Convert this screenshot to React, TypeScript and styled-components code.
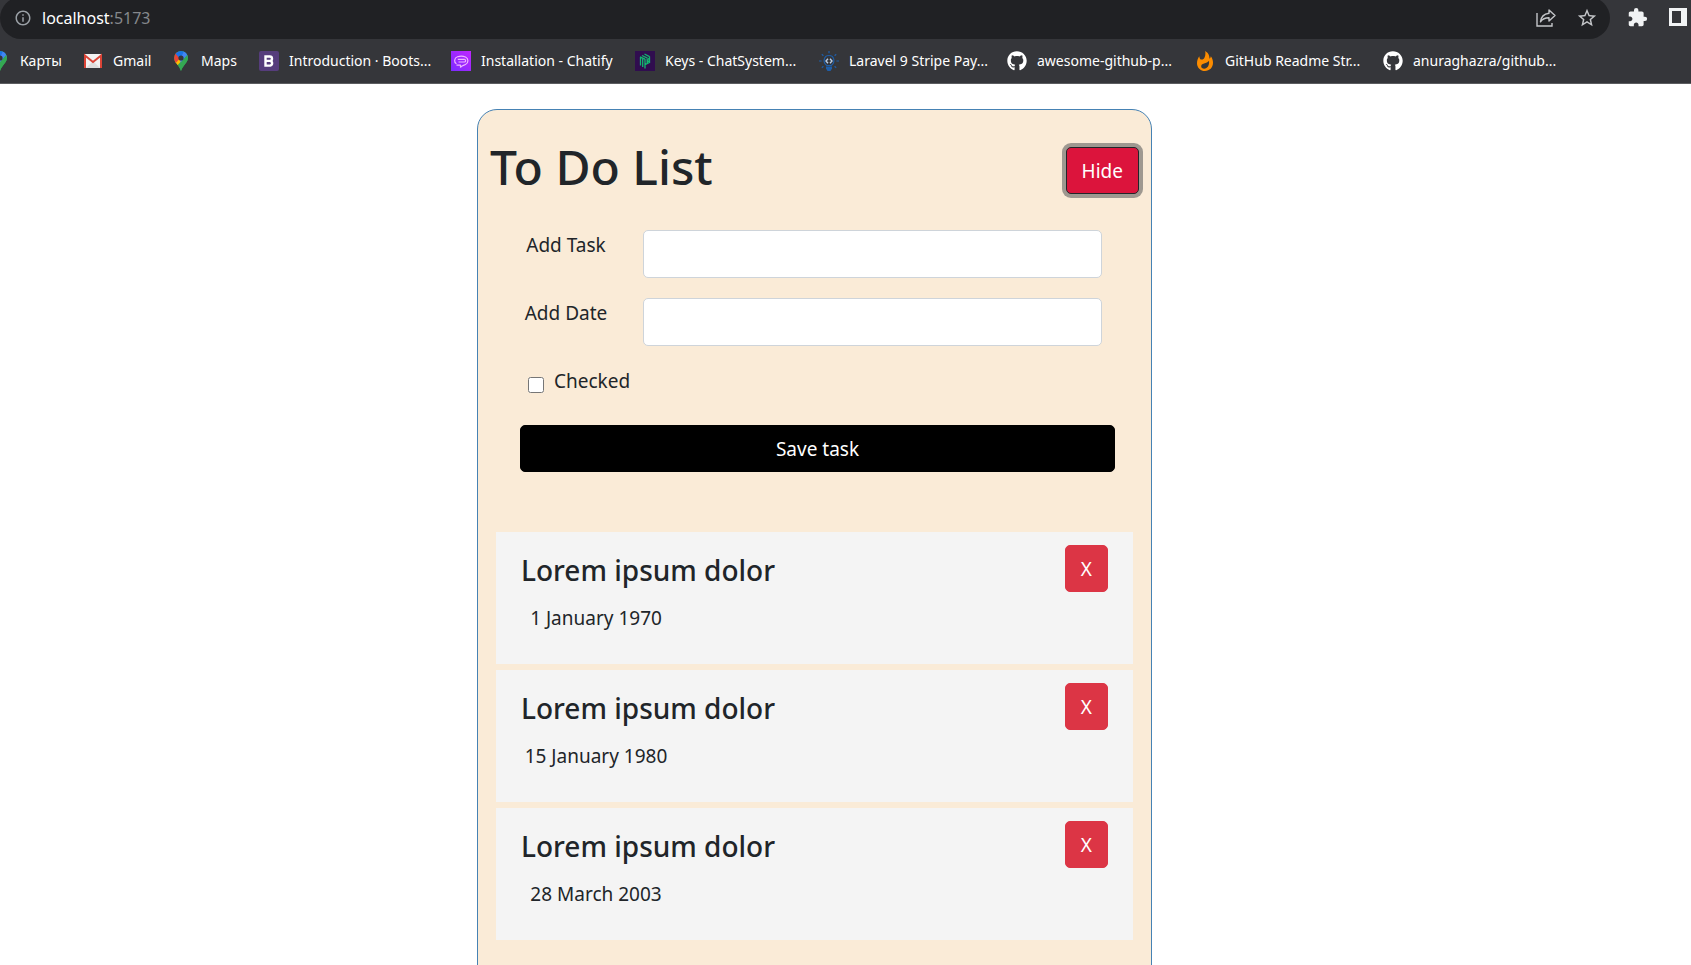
import React from 'react';
import styled, { createGlobalStyle } from 'styled-components';
import { FaGithub } from 'react-icons/fa';
import { MdExtension, MdStarBorder, MdInfoOutline } from 'react-icons/md';

const Global = createGlobalStyle`
  *, *::before, *::after { box-sizing: border-box; }
  body {
    margin: 0;
    background: #fff;
    color: #212529;
    font-family: "Noto Sans", "Open Sans", sans-serif;
    font-size: 19px;
    line-height: 30px;
  }
  button, input { font: inherit; }
  h1, h2, p { margin: 0; }
`;

const Page = styled.div`
  height: 100vh;
  overflow: hidden;
`;

const Chrome = styled.header`
  background: #35363a;
  border-bottom: 1px solid #5c5d60;
  overflow: hidden;
`;

const Toolbar = styled.div`
  display: flex;
  height: 39px;
`;

const AddressBar = styled.div`
  display: flex;
  flex: 1;
  align-items: center;
  gap: 20px;
  height: 42px;
  margin-top: -3px;
  padding: 0 12px 0 14px;
  border-radius: 21px;
  background: #202124;
  color: #9aa0a6;
`;

const SiteInfo = styled.button`
  display: flex;
  padding: 0;
  border: 0;
  background: none;
  color: #9aa0a6;
`;

const Address = styled.div`
  flex: 1;
  margin-left: -10px;
  font-size: 16px;
  color: #85888c;
`;

const Host = styled.span`
  color: #fff;
`;

const IconButton = styled.button<{ $color?: string }>`
  display: flex;
  padding: 0;
  border: 0;
  background: none;
  color: ${(p) => p.$color || '#c4c6c9'};
`;

const ToolbarActions = styled.div`
  display: flex;
  align-items: center;
  gap: 21px;
  height: 34px;
  padding: 0 4px 0 17px;
`;

const Bookmarks = styled.nav`
  display: flex;
  align-items: center;
  gap: 20px;
  height: 44px;
  margin-left: -10px;
`;

const Bookmark = styled.a<{ $width: number }>`
  display: flex;
  flex: none;
  align-items: center;
  gap: 10px;
  width: ${(p) => p.$width}px;
  color: #fff;
  font-size: 14px;
  line-height: 20px;
  white-space: nowrap;
  text-decoration: none;
  svg { flex: none; }
`;

const Main = styled.main`
  display: grid;
  grid-template-columns: 477fr 675fr 539fr;
  padding-top: 25px;
`;

const Card = styled.section`
  grid-column: 2;
  padding: 24px 12px 60px;
  border: 1px solid steelblue;
  border-radius: 20px;
  background: antiquewhite;
`;

const CardHeader = styled.div`
  display: flex;
  justify-content: space-between;
  align-items: flex-start;
  padding-top: 13px;
`;

const Title = styled.h1`
  margin-top: -10px;
  font-size: 48px;
  font-weight: 500;
  line-height: 60px;
`;

const Button = styled.button<{ $tone: string; $focused?: boolean }>`
  height: 47px;
  padding: 0 15px;
  border: 1px solid ${(p) => (p.$focused ? '#212529' : p.$tone)};
  border-radius: 5px;
  background: ${(p) => p.$tone};
  color: #fff;
  box-shadow: ${(p) => (p.$focused ? '0 0 0 4px rgba(66, 70, 73, 0.5)' : 'none')};
`;

const Form = styled.form`
  display: grid;
  gap: 20px;
  margin: 33px 24px 0 30px;
`;

const Field = styled.div`
  display: grid;
  grid-template-columns: 92px 1fr;
  gap: 31px;
  padding-right: 13px;
`;

const FieldLabel = styled.label`
  text-align: center;
`;

const TextInput = styled.input`
  width: 100%;
  height: 48px;
  padding: 0 15px;
  border: 1px solid #ced4da;
  border-radius: 5px;
  background: #fff;
`;

const CheckField = styled.div`
  display: flex;
  gap: 10px;
  height: 39px;
  padding-left: 8px;
`;

const Checkbox = styled.input`
  width: 16px;
  height: 16px;
  margin: 11px 0 0;
`;

const List = styled.ul`
  display: grid;
  gap: 6px;
  margin: 60px 6px 0;
  padding: 0;
  list-style: none;
`;

const Item = styled.li`
  display: flex;
  justify-content: space-between;
  align-items: flex-start;
  height: 132px;
  padding: 13px 25px;
  background: #f4f4f4;
`;

const ItemTitle = styled.h2`
  padding-top: 6px;
  font-size: 28px;
  font-weight: 500;
  line-height: 38px;
`;

const ItemDate = styled.p`
  width: 150px;
  padding-top: 14px;
  text-align: center;
`;

const MapsIcon = () => (
  <svg width="20" height="20" viewBox="0 0 20 20" aria-hidden="true">
    <clipPath id="pin"><path d="M10 0a6.900 6.900 0 0 0-6.900 6.900c0 3 1.700 4.700 3.500 7 1.500 2 2.500 3.300 3.400 6.100.9-2.800 1.900-4.100 3.400-6.100 1.800-2.300 3.500-4 3.500-7A6.900 6.900 0 0 0 10 0z" /></clipPath>
    <g clipPath="url(#pin)">
      <rect width="20" height="20" fill="#34a853" />
      <path d="M0 14 10 3 14 6 5 16z" fill="#fbbc04" />
      <path d="M0 0h6l4 6-6 7-4-4z" fill="#ea4335" />
      <path d="M4 2 10-1h10L10 9z" fill="#1a73e8" />
      <path d="M13 0h7v4L10 13l-1-4z" fill="#4285f4" />
      <path d="M17 3v17H5l5-9z" fill="#34a853" />
    </g>
    <circle cx="10" cy="7" r="2.600" fill="#35363a" />
  </svg>
);

const GmailIcon = () => (
  <svg width="20" height="20" viewBox="0 0 20 20" aria-hidden="true">
    <rect x="1" y="3" width="18" height="14" rx="1.500" fill="#f2f2f2" />
    <path d="M3 17 10 10l7 7z" fill="#dedede" />
    <path d="M2 17V4.500L10 11l8-6.500V17" fill="none" stroke="#db4437" strokeWidth="2" />
  </svg>
);

const BootstrapIcon = () => (
  <svg width="20" height="20" viewBox="0 0 20 20" aria-hidden="true">
    <rect width="20" height="20" rx="2" fill="#563d7c" />
    <path d="M6.500 5.500h4.300a2.200 2.200 0 0 1 0 4.400H6.500zM6.500 9.900h4.700a2.400 2.400 0 0 1 0 4.700H6.500z" fill="none" stroke="#fff" strokeWidth="2.400" />
  </svg>
);

const ChatifyIcon = () => (
  <svg width="20" height="20" viewBox="0 0 20 20" aria-hidden="true">
    <defs><linearGradient id="chat" x1="1" y1="0" x2="0" y2="1"><stop offset="0" stopColor="#c026ff" /><stop offset="1" stopColor="#7a2bff" /></linearGradient></defs>
    <rect width="20" height="20" fill="url(#chat)" />
    <path d="M5.500 12.800C2.800 11.500 3 7 6.500 5.800c2.500-.8 5.500-.8 8 .2 3.200 1.500 3.200 6 0 7.500-1.500.8-3 .8-5 2.700v-2H5.500M6.800 8.400h7M7.500 11h6c1.200 0 1.500-1.500.5-2.500" fill="none" stroke="#efb5ff" strokeWidth="1.200" strokeLinejoin="round" />
  </svg>
);

const KeysIcon = () => (
  <svg width="20" height="20" viewBox="0 0 20 20" aria-hidden="true">
    <rect width="20" height="20" fill="#300d4f" />
    <path d="M5.500 6v8.500M7.700 7v9M10 8v9.500M12.200 8v5M14.500 5.500v6.500M5 5.800l5 2.400M7 4.500l5.400 2.700M9.500 3l5 2.600M10 13.700l4.500-2.200M12 8.500l2.500-1.200M12 10.800l2.500-1.200" fill="none" stroke="#12b76f" strokeWidth="1.300" />
  </svg>
);

const BulbIcon = () => (
  <svg width="20" height="20" viewBox="0 0 20 20" aria-hidden="true">
    <g fill="none" stroke="#1f5ea8" strokeWidth="1.200">
      <path d="M7.800 14.500C3.500 11.500 4.500 4.500 10 4.500s6.500 7 2.200 10z" />
      <path d="M10 0v2.200M0 10h2.600M17.400 10H20M2.800 3.200l1.600 1.500M17.200 3.200l-1.600 1.500M2.800 16.800l1.600-1.500M17.200 16.800l-1.600-1.500" />
    </g>
    <path d="M7 15.500h6v2l-1.500 2.500h-3L7 17.500z" fill="#1f5ea8" />
    <path d="M9 7.800 7 10l2 2.200M11 7.800l2 2.200-2 2.200" fill="none" stroke="#b9cde6" strokeWidth="1.400" />
  </svg>
);

const Flame = () => (
  <svg width="20" height="20" viewBox="0 0 20 20" aria-hidden="true">
    <path
      fillRule="evenodd"
      fill="#fb8c00"
      d="M10.200 0c3.800 2.500 4.200 4.800 4.300 7.800.8-.7 1.200-1.500 1.300-2.600 1.600 2 2.200 4.200 2.200 6.600 0 4.800-3.500 8.200-8 8.200s-8-3.300-8-7.800C2 9.400 2.900 7 4.300 5.200c.1 2 .9 3.400 2.400 3.400 2.700 0 4.300-3.800 3.500-8.600zM14 9.800c-1.200 1.700-2.900 2.300-4.900 2.700-2 .4-3 1.500-2.900 3 .1 1.300 1.200 2.200 3 2.200 3.300 0 5.300-3.300 4.800-7.900z"
    />
  </svg>
);

const ShareIcon = () => (
  <svg width="20" height="20" viewBox="0 0 20 20" fill="none" stroke="currentColor" strokeWidth="1.400" aria-hidden="true">
    <path d="M1 5v13h15v-3" />
    <path d="M13 2l6 5.500-6 5.500V9.800c-4 0-6.500 1-8.500 4C5 9 8 5.800 13 5.200z" strokeLinejoin="round" />
  </svg>
);

const SidePanelIcon = () => (
  <svg width="18" height="18" viewBox="0 0 18 18" aria-hidden="true">
    <path fillRule="evenodd" d="M0 0h18v18H0zM3 3v12h9V3z" fill="#f1f3f4" />
  </svg>
);

const GitHub = () => <FaGithub size={20} />;

const bookmarks: { label: string; width: number; Icon: React.FC }[] = [
  { label: 'Карты', width: 73, Icon: MapsIcon },
  { label: 'Gmail', width: 68, Icon: GmailIcon },
  { label: 'Maps', width: 68, Icon: MapsIcon },
  { label: 'Introduction · Boots...', width: 172, Icon: BootstrapIcon },
  { label: 'Installation - Chatify', width: 164, Icon: ChatifyIcon },
  { label: 'Keys - ChatSystem...', width: 164, Icon: KeysIcon },
  { label: 'Laravel 9 Stripe Pay...', width: 168, Icon: BulbIcon },
  { label: 'awesome-github-p...', width: 168, Icon: GitHub },
  { label: 'GitHub Readme Str...', width: 168, Icon: Flame },
  { label: 'anuraghazra/github...', width: 172, Icon: GitHub },
];

const tasks = [
  { title: 'Lorem ipsum dolor', date: '1 January 1970' },
  { title: 'Lorem ipsum dolor', date: '15 January 1980' },
  { title: 'Lorem ipsum dolor', date: '28 March 2003' },
];

export default function App() {
  return (
    <Page>
      <Global />
      <Chrome>
        <Toolbar>
          <AddressBar>
            <SiteInfo aria-label="Site information"><MdInfoOutline size={18} /></SiteInfo>
            <Address><Host>localhost</Host>:5173</Address>
            <IconButton aria-label="Share"><ShareIcon /></IconButton>
            <IconButton aria-label="Bookmark this page"><MdStarBorder size={22} /></IconButton>
          </AddressBar>
          <ToolbarActions>
            <IconButton $color="#f1f3f4" aria-label="Extensions"><MdExtension size={21} /></IconButton>
            <IconButton aria-label="Side panel"><SidePanelIcon /></IconButton>
          </ToolbarActions>
        </Toolbar>
        <Bookmarks>
          {bookmarks.map(({ label, width, Icon }) => (
            <Bookmark key={label} href="#" $width={width}><Icon />{label}</Bookmark>
          ))}
        </Bookmarks>
      </Chrome>
      <Main>
        <Card>
          <CardHeader>
            <Title>To Do List</Title>
            <Button type="button" $tone="crimson" $focused>Hide</Button>
          </CardHeader>
          <Form>
            <Field>
              <FieldLabel htmlFor="task">Add Task</FieldLabel>
              <TextInput id="task" type="text" />
            </Field>
            <Field>
              <FieldLabel htmlFor="date">Add Date</FieldLabel>
              <TextInput id="date" type="text" />
            </Field>
            <CheckField>
              <Checkbox id="checked" type="checkbox" />
              <label htmlFor="checked">Checked</label>
            </CheckField>
            <Button type="button" $tone="#000">Save task</Button>
          </Form>
          <List>
            {tasks.map((task) => (
              <Item key={task.date}>
                <div>
                  <ItemTitle>{task.title}</ItemTitle>
                  <ItemDate>{task.date}</ItemDate>
                </div>
                <Button type="button" $tone="#dc3545" aria-label={`X, delete ${task.date}`}>X</Button>
              </Item>
            ))}
          </List>
        </Card>
      </Main>
    </Page>
  );
}
